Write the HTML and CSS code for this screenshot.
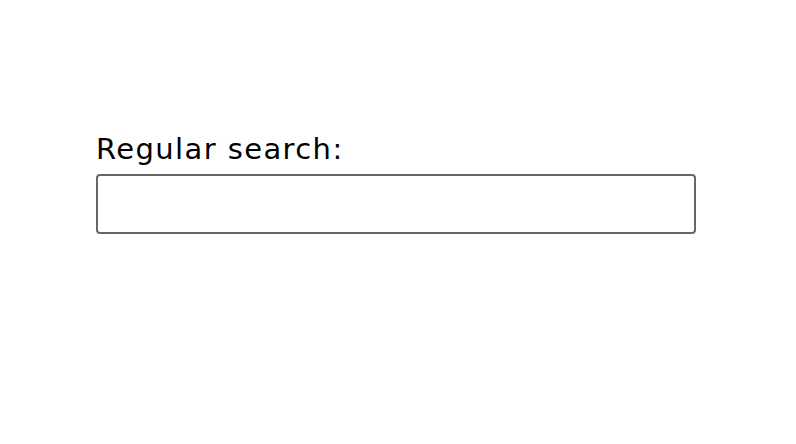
FILE: index.html
```html
<!DOCTYPE html>
<html>
<head>
<meta charset="utf-8">
<link rel="stylesheet" href="styles.css">
</head>
<body>
<div class="wrap">
  <label class="label" for="q">Regular search:</label>
  <input class="search" id="q" type="text">
</div>
</body>
</html>
```
FILE: styles.css
```css
html, body { margin: 0; padding: 0; background: #fff; }
.wrap {
  display: flex;
  flex-direction: column;
  padding: 128px 0 0 96px;
  width: 600px;
}
.label {
  font-family: "DejaVu Sans", sans-serif;
  font-size: 29px;
  letter-spacing: 1.4px;
  line-height: 40px;
  padding-top: 1px;
  color: #000;
  margin-bottom: 5px;
}
.search {
  box-sizing: border-box;
  width: 600px;
  height: 60px;
  border: 2px solid #666;
  border-radius: 4px;
  margin: 0;
  padding: 0 10px;
  background: #fff;
  font-size: 20px;
}
```
